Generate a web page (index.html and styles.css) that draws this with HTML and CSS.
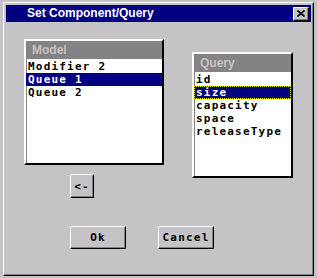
FILE: index.html
```html
<!DOCTYPE html>
<html lang="en">

<head>
    <meta charset="UTF-8">
    <meta name="viewport" content="width=device-width, initial-scale=1.0">
    <title>Set Component/Query</title>
    <link rel="stylesheet" href="styles.css">
</head>

<body>
    <div class="window">
        <div class="titlebar">
            <span class="title">Set Component/Query</span>
            <span class="close">
                <svg width="8" height="7" viewBox="0 0 8 7">
                    <path d="M0.5 0.5 L7.5 6.5 M7.5 0.5 L0.5 6.5" stroke="#000" stroke-width="1.6" />
                </svg>
            </span>
        </div>

        <div class="dialog_body">
            <div class="lists">
                <div class="left_col">
                    <div class="listbox model">
                        <div class="list_head">Model</div>
                        <ul class="items">
                            <li>Modifier 2</li>
                            <li class="selected">Queue 1</li>
                            <li>Queue 2</li>
                        </ul>
                    </div>
                    <button class="btn arrow">&lt;-</button>
                </div>

                <div class="listbox query">
                    <div class="list_head">Query</div>
                    <ul class="items">
                        <li>id</li>
                        <li class="selected focused">size</li>
                        <li>capacity</li>
                        <li>space</li>
                        <li>releaseType</li>
                    </ul>
                </div>
            </div>

            <div class="actions">
                <button class="btn action">Ok</button>
                <button class="btn action">Cancel</button>
            </div>
        </div>
    </div>
</body>

</html>
```

FILE: styles.css
```css
body {
    margin: 0;
    background-color: #c6c3c6;
    font-family: "DejaVu Sans Mono", monospace;
}

.window {
    box-sizing: border-box;
    width: 311px;
    height: 274px;
    margin: 2px 0 0 3px;
    padding: 2px;
    background-color: #c6c3c6;
    border-top: 1px solid #fff;
    border-left: 1px solid #fff;
    border-right: 1px solid #000;
    border-bottom: 1px solid #000;
    box-shadow: inset -1px -1px 0 #848284;
}

.titlebar {
    height: 17px;
    background-color: #000080;
    display: flex;
    align-items: center;
    justify-content: space-between;
    padding: 0 2px 0 21px;
}

.title {
    color: #fff;
    font-family: "Liberation Sans", Arial, sans-serif;
    font-weight: bold;
    font-size: 12px;
    line-height: 17px;
}

.close {
    box-sizing: border-box;
    width: 16px;
    height: 14px;
    background-color: #c6c3c6;
    border-top: 1px solid #fff;
    border-left: 1px solid #fff;
    border-right: 1px solid #000;
    border-bottom: 1px solid #000;
    box-shadow: inset -1px -1px 0 #848284;
    display: flex;
    align-items: center;
    justify-content: center;
}

.dialog_body {
    padding: 17px 0 0 18px;
}

.lists {
    display: flex;
    align-items: flex-start;
    gap: 28px;
}

.left_col {
    display: flex;
    flex-direction: column;
    align-items: flex-start;
}

.listbox {
    box-sizing: border-box;
    height: 126px;
    background-color: #fff;
    border-top: 2px solid #fff;
    border-left: 2px solid #fff;
    border-right: 2px solid #000;
    border-bottom: 2px solid #000;
    box-shadow: inset 1px 1px 0 #848284;
}

.listbox.model {
    width: 140px;
}

.listbox.query {
    width: 101px;
    margin-top: 13px;
}

.list_head {
    height: 18px;
    line-height: 18px;
    padding-left: 6px;
    background-color: #848284;
    color: #c6c3c6;
    font-family: "Liberation Sans", Arial, sans-serif;
    font-weight: bold;
    font-size: 12px;
}

.items {
    list-style: none;
    margin: 0;
    padding: 1px 0 0;
}

.items li {
    box-sizing: border-box;
    height: 13px;
    line-height: 13px;
    padding-left: 2px;
    font-size: 11px;
    letter-spacing: 1.2px;
    font-weight: bold;
    color: #000;
    white-space: nowrap;
    overflow: hidden;
}

.items li.selected {
    background-color: #000080;
    color: #fff;
}

.items li.focused {
    outline: 1px dotted #ffff00;
    outline-offset: -1px;
}

.btn {
    box-sizing: border-box;
    padding: 0;
    background-color: #c6c3c6;
    border-top: 1px solid #fff;
    border-left: 1px solid #fff;
    border-right: 1px solid #000;
    border-bottom: 1px solid #000;
    box-shadow: inset -1px -1px 0 #848284;
    font-family: "DejaVu Sans Mono", monospace;
    font-weight: bold;
    font-size: 11px;
    letter-spacing: 1.2px;
    color: #000;
}

.btn.arrow {
    width: 24px;
    height: 24px;
    margin: 9px 0 0 46px;
}

.actions {
    display: flex;
    gap: 32px;
    margin: 28px 0 0 46px;
}

.btn.action {
    width: 56px;
    height: 23px;
}
```
